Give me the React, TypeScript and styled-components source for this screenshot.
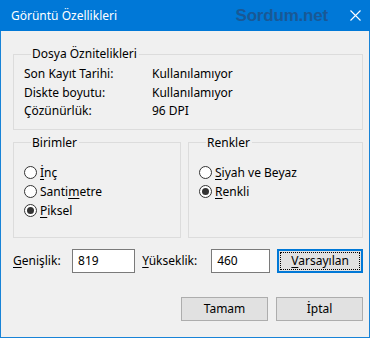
import React from 'react';
import styled, { createGlobalStyle } from 'styled-components';

const GlobalStyle = createGlobalStyle`
  html, body {
    margin: 0;
    padding: 0;
    background: #f0f0f0;
  }
  * {
    box-sizing: border-box;
  }
`;

const Window = styled.div`
  width: 370px;
  height: 338px;
  display: flex;
  flex-direction: column;
  border: 1px solid #1883d7;
  border-top: none;
  background: #f0f0f0;
  font-family: 'Noto Sans', 'Liberation Sans', sans-serif;
  font-size: 12px;
  color: #000;
`;

const TitleBar = styled.div`
  height: 31px;
  margin: 0 -1px;
  background: #0078d7;
  display: flex;
  align-items: center;
  padding-left: 11px;
  color: #fff;
  font-size: 12px;
`;

const Title = styled.span`
  flex: 1;
`;

const Watermark = styled.span`
  font-family: 'Liberation Sans', 'Noto Sans', sans-serif;
  font-weight: bold;
  font-size: 17px;
  letter-spacing: -0.2px;
  color: #195896;
  margin-right: 14px;
  margin-top: 1px;
`;

const CloseButton = styled.div`
  width: 26px;
  height: 31px;
  margin-right: 2px;
  display: flex;
  align-items: center;
  justify-content: center;
`;

const Body = styled.div`
  flex: 1;
  display: flex;
  flex-direction: column;
  padding: 15px 6px 0 12px;
`;

const Group = styled.fieldset<{ $pad: string }>`
  margin: 0;
  min-width: 0;
  border: 1px solid #dcdcdc;
  padding: ${(p) => p.$pad};
  flex: 1;
`;

const Legend = styled.legend`
  margin-left: 7px;
  padding: 0 2px 0 1px;
  line-height: 16px;
`;

const InfoRow = styled.div`
  display: grid;
  grid-template-columns: 128px auto;
  line-height: 18.5px;
`;

const GroupRow = styled.div`
  display: flex;
  gap: 7px;
  margin-top: 5px;
  height: 103px;
`;

const RadioRow = styled.label`
  display: flex;
  align-items: center;
  gap: 3px;
  height: 19px;
`;

const RadioCircle = styled.span<{ $checked?: boolean }>`
  width: 13px;
  height: 13px;
  border-radius: 50%;
  border: 1px solid #333;
  background: #fff;
  display: flex;
  align-items: center;
  justify-content: center;
  &::after {
    content: '';
    width: 7px;
    height: 7px;
    border-radius: 50%;
    background: ${(p) => (p.$checked ? '#333' : 'transparent')};
  }
`;

const U = styled.span`
  text-decoration: underline;
  text-underline-offset: 2px;
`;

const SizeRow = styled.div`
  display: flex;
  align-items: center;
  margin-top: 11px;
  height: 24px;
`;

const FieldLabel = styled.span<{ $w: number }>`
  width: ${(p) => p.$w}px;
`;

const TextBox = styled.div<{ $w: number }>`
  width: ${(p) => p.$w}px;
  height: 24px;
  background: #fff;
  border: 1px solid #7a7a7a;
  padding-left: 5px;
  display: flex;
  align-items: center;
  margin-right: 7px;
`;

const Button = styled.div<{ $focused?: boolean }>`
  width: 87px;
  height: 24px;
  background: #e1e1e1;
  border: ${(p) => (p.$focused ? '2px solid #0078d7' : '1px solid #adadad')};
  display: flex;
  align-items: center;
  justify-content: center;
  position: relative;
  ${(p) =>
    p.$focused &&
    `
    &::before {
      content: '';
      position: absolute;
      inset: 1px;
      border: 1px dotted #000;
    }
  `}
`;

const ButtonRow = styled.div`
  display: flex;
  justify-content: flex-end;
  gap: 8px;
  margin-top: 24px;
`;

export default function App() {
  return (
    <>
      <GlobalStyle />
      <Window>
        <TitleBar>
          <Title>Görüntü Özellikleri</Title>
          <Watermark>Sordum.net</Watermark>
          <CloseButton>
            <svg width="11" height="11" viewBox="0 0 11 11">
              <path d="M0.5 0.5 L10.5 10.5 M10.5 0.5 L0.5 10.5" stroke="#fff" strokeWidth="1.1" />
            </svg>
          </CloseButton>
        </TitleBar>
        <Body>
          <Group $pad="3px 10px 8px 10px" style={{ flex: 'none' }}>
            <Legend>Dosya Öznitelikleri</Legend>
            <InfoRow>
              <span>Son Kayıt Tarihi:</span>
              <span>Kullanılamıyor</span>
            </InfoRow>
            <InfoRow>
              <span>Diskte boyutu:</span>
              <span>Kullanılamıyor</span>
            </InfoRow>
            <InfoRow>
              <span>Çözünürlük:</span>
              <span>96 DPI</span>
            </InfoRow>
          </Group>
          <GroupRow>
            <Group $pad="12px 10px 0 10px">
              <Legend>Birimler</Legend>
              <RadioRow>
                <RadioCircle />
                <span><U>İ</U>nç</span>
              </RadioRow>
              <RadioRow>
                <RadioCircle />
                <span>Santi<U>m</U>etre</span>
              </RadioRow>
              <RadioRow>
                <RadioCircle $checked />
                <span><U>P</U>iksel</span>
              </RadioRow>
            </Group>
            <Group $pad="12px 10px 0 10px" style={{ flex: 'none', width: '175px' }}>
              <Legend>Renkler</Legend>
              <RadioRow>
                <RadioCircle />
                <span><U>S</U>iyah ve Beyaz</span>
              </RadioRow>
              <RadioRow>
                <RadioCircle $checked />
                <span><U>R</U>enkli</span>
              </RadioRow>
            </Group>
          </GroupRow>
          <SizeRow>
            <FieldLabel $w={60}><U>G</U>enişlik:</FieldLabel>
            <TextBox $w={64}>819</TextBox>
            <FieldLabel $w={70}><U>Y</U>ükseklik:</FieldLabel>
            <TextBox $w={60}>460</TextBox>
            <Button $focused>
              <span><U>V</U>arsayılan</span>
            </Button>
          </SizeRow>
          <ButtonRow>
            <Button>Tamam</Button>
            <Button>İptal</Button>
          </ButtonRow>
        </Body>
      </Window>
    </>
  );
}
